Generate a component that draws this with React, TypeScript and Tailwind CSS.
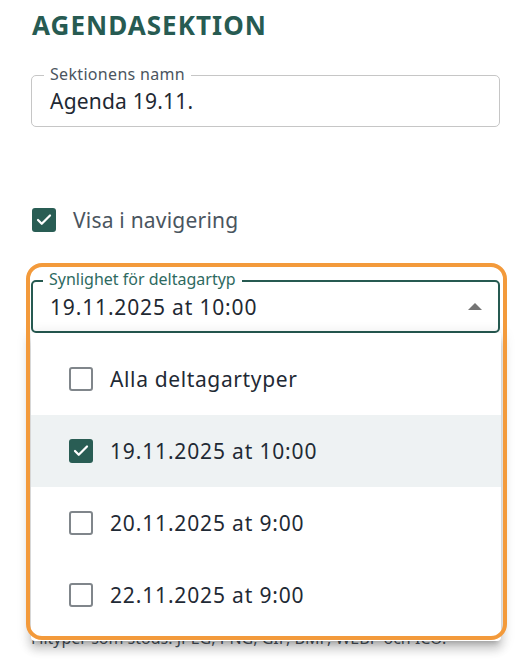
import { Check } from "lucide-react";

const options = [
  { label: "Alla deltagartyper", checked: false, date: false },
  { label: "19.11.2025 at 10:00", checked: true, date: true },
  { label: "20.11.2025 at 9:00", checked: false, date: true },
  { label: "22.11.2025 at 9:00", checked: false, date: true },
];

const Box = ({ checked }: { checked: boolean }) =>
  checked ? (
    <span className="flex h-6 w-6 shrink-0 items-center justify-center rounded-[3px] bg-[#295d54]">
      <Check className="h-[18px] w-[18px] text-white" strokeWidth={3} />
    </span>
  ) : (
    <span className="h-6 w-6 shrink-0 rounded-[3px] border-2 border-[#80868b] bg-white" />
  );

export default function App() {
  return (
    <div className="min-h-screen bg-white pt-2 pl-[31px] pr-[22px] font-['Noto_Sans',sans-serif]">
      <h2 className="pl-px text-[26px] font-bold leading-[34px] tracking-[0.04em] text-[#275b52]">
        AGENDASEKTION
      </h2>

      {/* text field */}
      <div className="relative mt-[33px] flex h-[52px] items-center rounded-[5px] border border-[#c6c6c6] pl-[18px]">
        <span className="absolute -top-[10px] left-[12px] bg-white px-[6px] text-[16px] leading-4 tracking-[0.02em] text-[#4b5560]">
          Sektionens namn
        </span>
        <span className="text-[21px] leading-7 tracking-[0.01em] text-[#1f2933]">
          Agenda 19.11.
        </span>
      </div>

      <label className="mt-[81px] ml-px flex h-6 items-center gap-[17px]">
        <Box checked />
        <span className="text-[21px] leading-7 tracking-[0.01em] text-[#4a5560]">
          Visa i navigering
        </span>
      </label>

      {/* select, open */}
      <div className="relative mt-[48px]">
        <div className="relative flex h-[53px] items-center justify-between rounded-[5px] border-2 border-[#265a51] pl-[17px] pr-[16px]">
          <span className="absolute -top-[11px] left-[10px] bg-white px-[6px] text-[16px] leading-4 text-[#2e6a5f]">
            Synlighet för deltagartyp
          </span>
          <span className="text-[21px] leading-7 tracking-[0.04em] text-[#1f2933]">
            19.11.2025 at 10:00
          </span>
          <svg width="14" height="7" viewBox="0 0 14 7">
            <path d="M0 7 L7 0 L14 7 Z" fill="#757575" />
          </svg>
        </div>

        <ul className="absolute top-full left-0 -right-px z-10 rounded-b-[4px] bg-white py-[10px] shadow-[0_5px_5px_-3px_rgba(0,0,0,0.2),0_8px_10px_1px_rgba(0,0,0,0.14),0_3px_14px_2px_rgba(0,0,0,0.12)]">
          {options.map((o) => (
            <li
              key={o.label}
              className={`flex h-[72px] items-center gap-[17px] pl-[38px] ${o.checked ? "bg-[#eef2f3]" : ""}`}
            >
              <Box checked={o.checked} />
              <span
                className={`text-[21px] leading-7 text-[#1f2a35] ${o.date ? "tracking-[0.04em]" : "tracking-[0.03em]"}`}
              >
                {o.label}
              </span>
            </li>
          ))}
        </ul>

        {/* highlight ring */}
        <div className="pointer-events-none absolute -top-[17px] -left-[5px] -right-[7px] z-20 h-[377px] rounded-[16px] border-4 border-[#f39a3b]" />
      </div>

      <p className="mt-[293px] text-[16px] leading-6 text-[#4b5560]">
        Filtyper som stöds: JPEG, PNG, GIF, BMP, WEBP och ICO.
      </p>
    </div>
  );
}
